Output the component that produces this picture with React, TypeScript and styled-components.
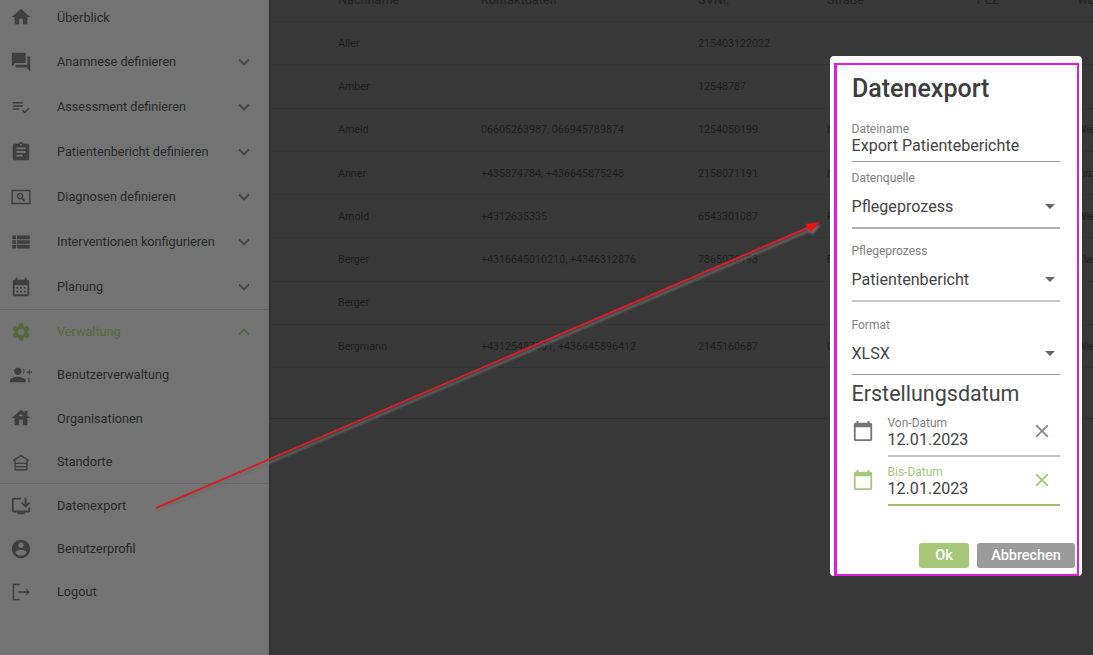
import React from 'react';
import styled, { createGlobalStyle } from 'styled-components';

const GlobalStyle = createGlobalStyle`
  html, body {
    margin: 0;
    padding: 0;
    background: #383838;
    font-family: Roboto, "Liberation Sans", sans-serif;
  }
`;

const Page = styled.div`
  position: relative;
  display: flex;
  width: 1093px;
  height: 655px;
  overflow: hidden;
  background: #383838;
`;

const Sidebar = styled.nav`
  flex: 0 0 269px;
  height: 660px;
  margin-top: -5px;
  background: #737373;
  box-shadow: 1px 0 2px rgba(0, 0, 0, 0.15);
`;

const Item = styled.div<{ $height: number; $active?: boolean }>`
  display: flex;
  align-items: center;
  height: ${(p) => p.$height}px;
  padding: 0 14px 0 10px;
  font-size: 12.7px;
  color: ${(p) => (p.$active ? '#55693b' : '#2a2a2a')};
`;

const ItemIcon = styled.svg`
  flex: 0 0 22px;
  width: 22px;
  height: 22px;
  margin-right: 25px;
  overflow: visible;
  fill: currentColor;
  color: #3f3f3f;
  &[data-active='true'] {
    color: #55693b;
  }
`;

const ItemLabel = styled.span`
  flex: 1;
`;

const Chevron = styled.svg`
  width: 22px;
  height: 22px;
  fill: #474747;
  &[data-active='true'] {
    fill: #55693b;
  }
`;

const NavDivider = styled.div`
  height: 1px;
  background: #676767;
`;

const Main = styled.main`
  flex: 1;
  min-width: 0;
  margin-top: -22px;
`;

const Row = styled.div<{ $head?: boolean }>`
  display: grid;
  grid-template-columns: 143px 217px 129px 150px 100px minmax(0, 1fr);
  align-items: center;
  height: ${(p) => (p.$head ? 44 : 43.3)}px;
  box-sizing: border-box;
  padding-left: 69px;
  border-bottom: 1px solid #333333;
  font-size: ${(p) => (p.$head ? 12.7 : 10.7)}px;
  color: ${(p) => (p.$head ? '#232323' : '#1f1f1f')};
  white-space: nowrap;
`;

const Footer = styled.div`
  height: 50px;
  border-bottom: 1px solid #2f2f2f;
`;

const Arrow = styled.svg`
  position: absolute;
  left: 0;
  top: 0;
  width: 1093px;
  height: 655px;
  pointer-events: none;
`;

const ArrowShape = styled.g`
  filter: drop-shadow(1px 3px 1px #6c6c6c);
`;

const Dialog = styled.section`
  position: absolute;
  left: 830px;
  top: 56px;
  display: flex;
  flex-direction: column;
  width: 252px;
  height: 520px;
  box-sizing: border-box;
  padding: 19px 22px 8px;
  background: #ffffff;
  border-radius: 4px;
  color: #333333;
`;

const Frame = styled.div`
  position: absolute;
  left: 4px;
  right: 3px;
  top: 7px;
  bottom: 0;
  border: solid #e31ae3;
  border-width: 2px 2px 2px 3px;
  pointer-events: none;
`;

const Title = styled.h2`
  margin: 0;
  font-size: 25px;
  line-height: 28px;
  font-weight: 500;
  color: #3d3d3d;
`;

const Label = styled.div<{ $focus?: boolean }>`
  margin-left: -0.5px;
  font-size: 12px;
  line-height: 14px;
  color: ${(p) => (p.$focus ? '#a5c77a' : '#808080')};
`;

const Value = styled.div`
  margin-left: -0.5px;
  padding-top: 1px;
  font-size: 16.1px;
  line-height: 18px;
  color: #444444;
`;

const TextField = styled.div`
  margin-top: 19px;
  padding-bottom: 6px;
  border-bottom: 1px solid #9a9a9a;
`;

const SelectField = styled.div<{ $top: number; $bottom: number; $line: string }>`
  margin-top: ${(p) => p.$top}px;
  padding-bottom: ${(p) => p.$bottom}px;
  border-bottom: ${(p) => p.$line};
`;

const SelectValue = styled.div`
  display: flex;
  align-items: center;
  justify-content: space-between;
  height: 24px;
  margin: 9px 0 0 -0.5px;
  font-size: 16.1px;
  color: #444444;
`;

const Caret = styled.svg`
  width: 24px;
  height: 24px;
  margin-right: -2px;
  fill: #666666;
`;

const Subtitle = styled.h3`
  margin: 6px 0 0 -0.5px;
  font-size: 21.5px;
  line-height: 26px;
  font-weight: 400;
  color: #444444;
`;

const DateRow = styled.div<{ $top: number }>`
  display: flex;
  margin-top: ${(p) => p.$top}px;
`;

const DateIcon = styled.svg<{ $focus?: boolean }>`
  flex: 0 0 22px;
  width: 22px;
  height: 22px;
  margin: 4px 14px 0 0;
  fill: ${(p) => (p.$focus ? '#a5c77a' : '#757575')};
`;

const DateField = styled.div<{ $focus?: boolean }>`
  display: flex;
  flex: 1;
  justify-content: space-between;
  padding-bottom: 6px;
  border-bottom: ${(p) => (p.$focus ? '2px solid #a5bf6f' : '2px solid #c4c4c4')};
`;

const ClearIcon = styled.svg<{ $focus?: boolean }>`
  width: 22px;
  height: 22px;
  margin: 4px 7px 0 0;
  fill: ${(p) => (p.$focus ? '#a5c77a' : '#8a8a8a')};
`;

const Actions = styled.div`
  display: flex;
  justify-content: flex-end;
  gap: 8px;
  margin: auto -15px 0 0;
`;

const Button = styled.button<{ $primary?: boolean }>`
  width: ${(p) => (p.$primary ? 50 : 98)}px;
  height: 25px;
  padding: 0;
  border: 0;
  border-radius: 3px;
  background: ${(p) => (p.$primary ? '#a6c878' : '#9b9b9b')};
  color: #ffffff;
  font-family: inherit;
  font-size: 14.4px;
  font-weight: 500;
`;

const paths = {
  home: 'M10 20v-6h4v6h5v-8h3L12 3 2 12h3v8z',
  forum: 'M22 6h-3v9H6v3h12l4 4V6zm-5 7V2H2v15l4-4h11z',
  checklist: 'M14 10H3v1.6h11V10zm0-3.5H3v1.6h11V6.500zM3 15h7v-1.600H3V15zm17.400-2.400 1.100 1.100-5.500 5.300-3-3 1.100-1.100 1.900 1.900 4.400-4.200z',
  assignment: 'M19 3h-4.180C14.400 1.840 13.300 1 12 1c-1.300 0-2.400.840-2.820 2H5c-1.100 0-2 .900-2 2v14c0 1.100.900 2 2 2h14c1.100 0 2-.900 2-2V5c0-1.100-.900-2-2-2zm-7 0c.550 0 1 .450 1 1s-.450 1-1 1-1-.450-1-1 .450-1 1-1zm2 14H7v-2h7v2zm3-4H7v-2h10v2zm0-4H7V7h10v2z',
  viewList: 'M2.500 14h4v-4h-4v4zm0 5h4v-4h-4v4zm0-10h4V5h-4v4zm5 5h14v-4h-14v4zm0 5h14v-4h-14v4zm0-14v4h14V5h-14z',
  calendar: 'M19 4h-1V2h-2v2H8V2H6v2H5c-1.110 0-1.990.900-1.990 2L3 20c0 1.100.890 2 2 2h14c1.100 0 2-.900 2-2V6c0-1.100-.900-2-2-2zm0 16H5V10h14v10zM9 14H7v-2h2v2zm4 0h-2v-2h2v2zm4 0h-2v-2h2v2zm-8 4H7v-2h2v2zm4 0h-2v-2h2v2zm4 0h-2v-2h2v2z',
  settings: 'M19.140 12.940c.040-.300.060-.610.060-.940 0-.320-.020-.640-.070-.940l2.030-1.580c.180-.140.230-.410.120-.610l-1.920-3.320c-.120-.220-.370-.290-.590-.220l-2.390.960c-.500-.380-1.030-.700-1.620-.940l-.360-2.540c-.040-.240-.240-.410-.480-.410h-3.840c-.240 0-.430.170-.470.410l-.360 2.540c-.590.240-1.130.570-1.620.940l-2.390-.960c-.220-.080-.470 0-.590.220L2.740 8.870c-.120.210-.080.470.120.610l2.030 1.580c-.050.300-.090.630-.090.940s.020.640.07.940l-2.030 1.580c-.180.140-.230.410-.12.610l1.920 3.320c.120.220.370.290.590.220l2.390-.960c.500.380 1.030.700 1.620.940l.360 2.540c.050.240.240.410.480.410h3.840c.240 0 .440-.170.470-.410l.360-2.540c.590-.240 1.130-.560 1.620-.940l2.390.960c.220.080.470 0 .590-.220l1.920-3.320c.120-.220.070-.470-.120-.610l-2.010-1.580zM12 15.600c-1.980 0-3.600-1.620-3.600-3.600s1.620-3.600 3.600-3.600 3.600 1.620 3.600 3.600-1.620 3.600-3.600 3.600z',
  house: 'M19 9.300V4h-3v2.600L12 3 2 12h3v8h5v-6h4v6h5v-8h3l-3-2.700zm-9 .700c0-1.100.900-2 2-2s2 .900 2 2h-4z',
  install: 'M20 17H4V5h8V3H4c-1.110 0-2 .890-2 2v12c0 1.100.890 2 2 2h4v2h8v-2h4c1.100 0 2-.900 2-2v-3h-2v3zm-3-3 5-5-1.410-1.410L18 10.170V3h-2v7.170l-2.590-2.580L12 9l5 5z',
  account: 'M12 2C6.480 2 2 6.480 2 12s4.480 10 10 10 10-4.480 10-10S17.520 2 12 2zm0 3c1.660 0 3 1.340 3 3s-1.340 3-3 3-3-1.340-3-3 1.340-3 3-3zm0 14.200c-2.500 0-4.710-1.280-6-3.220.030-1.990 4-3.080 6-3.080 1.990 0 5.970 1.090 6 3.080-1.290 1.940-3.500 3.220-6 3.220z',
  expandMore: 'M16.590 8.590 12 13.170 7.410 8.590 6 10l6 6 6-6z',
  expandLess: 'M12 8l-6 6 1.410 1.410L12 10.830l4.590 4.580L18 14z',
  caret: 'M7 10l5 5 5-5z',
  today: 'M20 3h-1V1h-2v2H7V1H5v2H4c-1.100 0-2 .900-2 2v16c0 1.100.900 2 2 2h16c1.100 0 2-.900 2-2V5c0-1.100-.900-2-2-2zm0 18H4V8h16v13z',
  close: 'M19 6.410 17.590 5 12 10.590 6.410 5 5 6.410 10.590 12 5 17.590 6.410 19 12 13.410 17.590 19 19 17.590 13.410 12z',
};

// icons that have no plain material path
const DiagnoseGlyph = () => (
  <>
    <path d="M1.500 4h21v16h-21V4zm1.600 1.600v12.800h17.800V5.600H3.100z" />
    <path d="M11 7.300a3.700 3.700 0 0 1 3 5.800l2.500 2.500-1.200 1.200-2.500-2.500a3.700 3.700 0 1 1-1.800-7zm0 1.700a2 2 0 1 0 0 4 2 2 0 0 0 0-4z" />
  </>
);

const UserAddGlyph = () => (
  <>
    <circle cx="8.500" cy="8" r="4" />
    <path d="M0 20v-2.200c0-2.600 5.600-3.900 8.500-3.900s8.500 1.300 8.500 3.900V20H0z" />
    <path d="M13.500 4.300a4 4 0 0 1 0 7.400c1.700-2 1.700-5.400 0-7.400zM20.500 6h1.200v2.300H24v1.200h-2.300v2.300h-1.200V9.500h-2.300V8.300h2.300V6zM20 15h1.300v5H20z" />
  </>
);

const StandortGlyph = () => (
  <path
    d="M3.500 10.500 12 5l8.500 5.500M5.500 9.500V20.500M18.500 9.500V20.500M5.500 13.500h13M5.500 17h13M5.500 20.500h13"
    fill="none"
    stroke="currentColor"
    strokeWidth="1.500"
  />
);

const LogoutGlyph = () => (
  <path d="M3 3h7.500v1.500H4.500v15h6V21H3V3zm15 5.500 3.500 3.500-3.500 3.500-1-1 1.800-1.800H9v-1.400h9.800L17 9.500l1-1z" />
);

type NavEntry = {
  label: string;
  d?: string;
  glyph?: React.ReactNode;
  chevron?: 'more' | 'less';
  active?: boolean;
};

const topNav: NavEntry[] = [
  { label: 'Überblick', d: paths.home },
  { label: 'Anamnese definieren', d: paths.forum, chevron: 'more' },
  { label: 'Assessment definieren', d: paths.checklist, chevron: 'more' },
  { label: 'Patientenbericht definieren', d: paths.assignment, chevron: 'more' },
  { label: 'Diagnosen definieren', glyph: <DiagnoseGlyph />, chevron: 'more' },
  { label: 'Interventionen konfigurieren', d: paths.viewList, chevron: 'more' },
  { label: 'Planung', d: paths.calendar, chevron: 'more' },
];

const adminNav: NavEntry[] = [
  { label: 'Verwaltung', d: paths.settings, chevron: 'less', active: true },
  { label: 'Benutzerverwaltung', glyph: <UserAddGlyph /> },
  { label: 'Organisationen', d: paths.house },
  { label: 'Standorte', glyph: <StandortGlyph /> },
];

const bottomNav: NavEntry[] = [
  { label: 'Datenexport', d: paths.install },
  { label: 'Benutzerprofil', d: paths.account },
  { label: 'Logout', glyph: <LogoutGlyph /> },
];

const NavItem = ({ entry, height }: { entry: NavEntry; height: number }) => (
  <Item $height={height} $active={entry.active}>
    <ItemIcon viewBox="0 0 24 24" data-active={entry.active ? 'true' : 'false'}>
      {entry.d ? <path d={entry.d} /> : entry.glyph}
    </ItemIcon>
    <ItemLabel>{entry.label}</ItemLabel>
    {entry.chevron && (
      <Chevron viewBox="0 0 24 24" data-active={entry.active ? 'true' : 'false'}>
        <path d={entry.chevron === 'more' ? paths.expandMore : paths.expandLess} />
      </Chevron>
    )}
  </Item>
);

const patients = [
  ['Aller', '', '215403122022', '', '', ''],
  ['Amber', '', '12548787', '', '', ''],
  ['Ameld', '06605263987, 066945789874', '1254050199', 'Neugasse 4', '', 'Wien'],
  ['Anner', '+435874784, +436645875248', '2158071191', 'Nordweg 2', '', 'Linz'],
  ['Arnold', '+4312635335', '6543301087', 'Feldweg 9', '', 'Wien'],
  ['Berger', '+4316645010210, +4346312876', '7865070193', 'Bahnstraße 1', '', 'Klagenfurt'],
  ['Berger', '', '', '', '', ''],
  ['Bergmann', '+43125487501, +436645896412', '2145160687', '0', '', 'Wien'],
];

const App: React.FC = () => {
  return (
    <Page>
      <GlobalStyle />
      <Sidebar>
        {topNav.map((entry, i) => (
          <NavItem key={entry.label} entry={entry} height={i > 0 ? 45 : 44} />
        ))}
        <NavDivider />
        {adminNav.map((entry) => (
          <NavItem key={entry.label} entry={entry} height={43.3} />
        ))}
        <NavDivider />
        {bottomNav.map((entry) => (
          <NavItem key={entry.label} entry={entry} height={43} />
        ))}
      </Sidebar>

      <Main>
        <Row $head>
          <span>Nachname</span>
          <span>Kontaktdaten</span>
          <span>SVNr.</span>
          <span>Straße</span>
          <span>PLZ</span>
          <span>Wohnort</span>
        </Row>
        {patients.map((cells, i) => (
          <Row key={i}>
            {cells.map((cell, j) => (
              <span key={j}>{cell}</span>
            ))}
          </Row>
        ))}
        <Footer />
      </Main>

      <Arrow viewBox="0 0 1093 655">
        <ArrowShape>
          <line x1="156" y1="508" x2="812" y2="226" stroke="#d81f26" strokeWidth="2" />
          <polygon points="820,222 805,224 811,232" fill="#ee1111" />
        </ArrowShape>
      </Arrow>

      <Dialog>
        <Frame />
        <Title>Datenexport</Title>
        <TextField>
          <Label>Dateiname</Label>
          <Value>Export Patienteberichte</Value>
        </TextField>
        <SelectField $top={9} $bottom={9} $line="2px solid #b0b0b0">
          <Label>Datenquelle</Label>
          <SelectValue>
            Pflegeprozess
            <Caret viewBox="0 0 24 24"><path d={paths.caret} /></Caret>
          </SelectValue>
        </SelectField>
        <SelectField $top={15} $bottom={9} $line="2px solid #c8c8c8">
          <Label>Pflegeprozess</Label>
          <SelectValue>
            Patientenbericht
            <Caret viewBox="0 0 24 24"><path d={paths.caret} /></Caret>
          </SelectValue>
        </SelectField>
        <SelectField $top={16} $bottom={9} $line="1px solid #9a9a9a">
          <Label>Format</Label>
          <SelectValue>
            XLSX
            <Caret viewBox="0 0 24 24"><path d={paths.caret} /></Caret>
          </SelectValue>
        </SelectField>
        <Subtitle>Erstellungsdatum</Subtitle>
        <DateRow $top={9}>
          <DateIcon viewBox="0 0 24 24"><path d={paths.today} /></DateIcon>
          <DateField>
            <div>
              <Label>Von-Datum</Label>
              <Value>12.01.2023</Value>
            </div>
            <ClearIcon viewBox="0 0 24 24"><path d={paths.close} /></ClearIcon>
          </DateField>
        </DateRow>
        <DateRow $top={8}>
          <DateIcon $focus viewBox="0 0 24 24"><path d={paths.today} /></DateIcon>
          <DateField $focus>
            <div>
              <Label $focus>Bis-Datum</Label>
              <Value>12.01.2023</Value>
            </div>
            <ClearIcon $focus viewBox="0 0 24 24"><path d={paths.close} /></ClearIcon>
          </DateField>
        </DateRow>
        <Actions>
          <Button $primary>Ok</Button>
          <Button>Abbrechen</Button>
        </Actions>
      </Dialog>
    </Page>
  );
};

export default App;
